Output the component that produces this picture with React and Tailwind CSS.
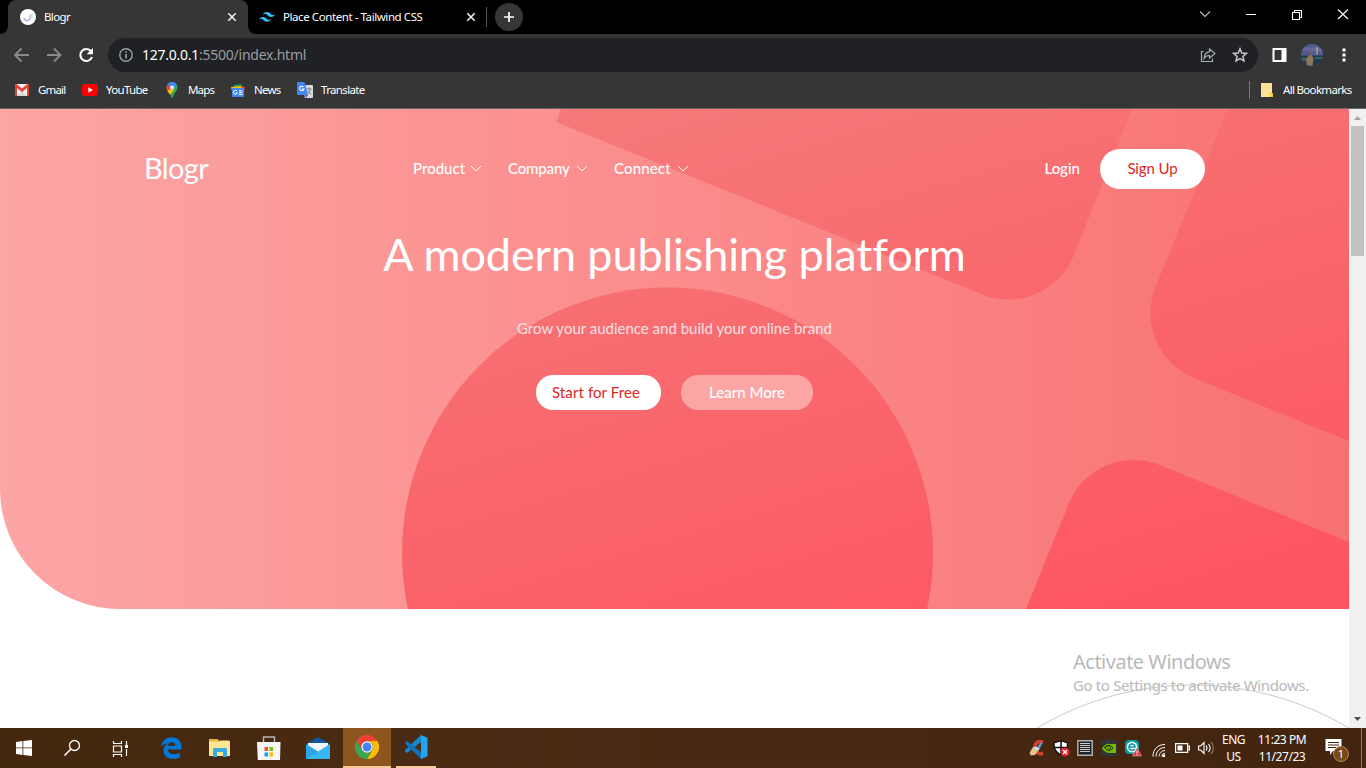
import React from "react";

const CloseIcon = ({ className = "" }) => (
  <svg className={className} width="10" height="10" viewBox="0 0 10 10" stroke="#f1f1f1" strokeWidth="1.6">
    <path d="M1.3 1.3 8.7 8.7M8.7 1.3 1.3 8.7" />
  </svg>
);

function TabStrip() {
  return (
    <div className="flex h-[34px] bg-black">
      <div className="flex w-2 items-end bg-[#363636]">
        <div className="h-full w-2 rounded-br-lg bg-black" />
      </div>
      <div className="flex w-60 bg-black">
        <div className="flex w-full items-center rounded-t-lg bg-[#363636] pl-3 pr-[11px]">
          <svg width="16" height="16" viewBox="0 0 16 16">
            <circle cx="8" cy="8" r="8" fill="#fff" />
            <path d="M4 8.500c0 4 6 4 6 .5V6.500" fill="none" stroke="#a9aee0" strokeWidth="1.200" />
            <path d="M9 8l2.500-2.500M12 5v4.500" stroke="#a5dfe2" strokeWidth="1.100" />
          </svg>
          <span className="ml-2 flex-1 text-[11.5px] tracking-[-0.6px] text-white">Blogr</span>
          <CloseIcon />
        </div>
      </div>
      <div className="flex w-[238px] bg-[#363636]">
        <div className="flex h-full w-full items-center rounded-bl-lg bg-black pl-[11px] pr-[10px]">
          <svg width="16" height="10" viewBox="0 0 54 33" fill="#38bdf8">
            <path d="M27 0C19.800 0 15.300 3.600 13.500 10.800 16.200 7.200 19.350 5.850 22.950 6.750 25.004 7.263 26.472 8.754 28.097 10.403 30.744 13.090 33.808 16.200 40.500 16.200 47.700 16.200 52.200 12.600 54 5.400 51.300 9 48.150 10.350 44.550 9.450 42.496 8.937 41.028 7.446 39.403 5.797 36.756 3.110 33.692 0 27 0ZM13.500 16.200C6.300 16.200 1.800 19.800 0 27 2.700 23.400 5.850 22.050 9.450 22.950 11.504 23.464 12.972 24.954 14.597 26.603 17.244 29.290 20.308 32.400 27 32.400 34.200 32.400 38.700 28.800 40.500 21.600 37.800 25.200 34.650 26.550 31.050 25.650 28.996 25.137 27.528 23.646 25.903 21.997 23.256 19.310 20.192 16.200 13.500 16.200Z" />
          </svg>
          <span className="ml-2 flex-1 whitespace-nowrap text-[11.5px] tracking-[-0.42px] text-white">Place Content - Tailwind CSS</span>
          <CloseIcon />
        </div>
      </div>
      <div className="flex flex-1 items-center bg-black">
        <div className="mt-[-1px] h-5 w-px bg-[#55585b]" />
        <div className="ml-2 flex h-7 w-7 items-center justify-center rounded-full bg-[#363636]">
          <svg width="10" height="10" viewBox="0 0 10 10" stroke="#fff" strokeWidth="1.7"><path d="M5 0v10M0 5h10" /></svg>
        </div>
        <svg className="ml-auto mr-[15px] mb-[6px]" width="156" height="14" viewBox="0 0 156 14" fill="none" stroke="#fff">
          <path d="M5 4.500 10 9.500 15 4.500" stroke="#bbb" strokeWidth="1.100" />
          <path d="M51 7.500h10" strokeWidth="1" />
          <path d="M97.500 5.500h7v7h-7zM99.500 5.500v-2h7v7h-2" strokeWidth="1.100" />
          <path d="M143 2.500 153 12M153 2.500 143 12" strokeWidth="1.100" />
        </svg>
      </div>
    </div>
  );
}

function Toolbar() {
  return (
    <div className="flex h-[42px] items-center bg-[#363636]">
      <svg className="ml-[13px]" width="82" height="18" viewBox="0 0 82 18" fill="none" stroke="#8b8b8b" strokeWidth="1.800">
        <path d="M16 9H2.500M8.500 2.500 2 9l6.500 6.500" />
        <path d="M34 9h13.500M41 2.500 47.500 9 41 15.500" />
        <path d="M78 5.200A6 6 0 1 0 79 11" stroke="#fff" strokeWidth="2.100" />
        <path d="M80 2v6.300h-6.300z" fill="#fff" stroke="none" />
      </svg>
      <div className="ml-[13px] flex h-[34px] w-[1150px] items-center rounded-full bg-[#202124] pl-[11px] pr-[10px]">
        <svg width="14" height="14" viewBox="0 0 14 14" fill="none" stroke="#9aa0a6" strokeWidth="1.400">
          <circle cx="7" cy="7" r="6.200" /><path d="M7 6v4.500M7 3.300v1.500" strokeWidth="1.600" />
        </svg>
        <span className="ml-[9px] flex-1 text-sm tracking-[-0.25px] text-[#9a9da0]"><span className="text-white">127.0.0.1</span>:5500/index.html</span>
        <svg width="16" height="16" viewBox="0 0 16 16" fill="none" stroke="#aaadb0" strokeWidth="1.200">
          <path d="M3.500 4.500H1.500v10h11v-3" />
          <path d="M9.500 2l5.500 4.500L9.500 11V8.500C7 8.300 5.500 9.300 4 11.500 4.300 8 6 5.200 9.500 4.700z" />
        </svg>
        <svg className="ml-[16px]" width="16" height="16" viewBox="0 0 16 16" fill="none" stroke="#c5c7c9" strokeWidth="1.500">
          <path d="M8 1.800 9.800 6l4.600.4-3.500 3 1.100 4.500L8 11.500 4 13.900l1.100-4.500-3.500-3L6.200 6z" />
        </svg>
      </div>
      <svg className="ml-[14px]" width="15" height="14" viewBox="0 0 15 14"><path fill="#fff" fillRule="evenodd" d="M.5 0h14v14H.5zM2.500 2v10h7V2z" /></svg>
      <svg className="ml-[14px]" width="22" height="22" viewBox="0 0 22 22">
        <defs><clipPath id="avatar"><circle cx="11" cy="11" r="11" /></clipPath></defs>
        <g clipPath="url(#avatar)">
          <path fill="#4f5a8e" d="M0 0h22v22H0z" />
          <path fill="#66699b" d="M0 3l22 1v4L0 6z" />
          <path fill="#20384d" d="M0 11.500h22V22H0z" />
          <path fill="#37665f" d="M0 14l8-1v4H0zM14 13h8v2h-8z" />
          <path fill="#b8a17f" d="M15 2.500l1.500 1 .5 7h-1.500z" />
          <path fill="#8b7657" d="M5 15l3-4 3 0 1.500 4-1 7H6z" /><circle cx="9.500" cy="8.800" r="1.700" fill="#83593c" />
        </g>
      </svg>
      <svg className="ml-[19px]" width="4" height="14" viewBox="0 0 4 14" fill="#fff"><path d="M.5.500h3v3h-3zM.5 5.500h3v3h-3zM.5 10.500h3v3h-3z" /></svg>
    </div>
  );
}

const GmailIcon = () => (
  <svg width="14" height="12" viewBox="0 0 14 12">
    <path fill="#f2f2f2" d="M0 0h14v12H0z" /><path fill="#d8d8d8" d="M2 12l5-5 5 5z" />
    <path fill="#e04337" d="M0 0h1.500L7 4.500 12.500 0H14v12h-2V4L7 8 2 4v8H0z" />
  </svg>
);
const YouTubeIcon = () => (
  <svg width="16" height="12" viewBox="0 0 16 12"><rect width="16" height="12" rx="3" fill="#f00" /><path fill="#fff" d="M6.300 3.300 11 6 6.300 8.700z" /></svg>
);
const MapsIcon = () => (
  <svg width="12" height="16" viewBox="0 0 12 16">
    <path fill="#34a853" d="M6 0a5.500 5.500 0 0 1 5.500 5.500C11.500 9 7.500 11 6.800 15.500H5.200C4.500 11 .5 9 .5 5.500A5.500 5.500 0 0 1 6 0z" />
    <path fill="#fbbc04" d="M1 8 6 2.500 8 8l-4 4.500C3 11 1.500 9.800 1 8z" />
    <path fill="#ea4335" d="M1.800 2 6 5.500 1.500 9C.3 7 0 4 1.800 2z" />
    <path fill="#4285f4" d="M1.800 2C4-.7 9-.7 10.700 2.700L6 8z" />
    <circle cx="6" cy="5.500" r="1.900" fill="#e9eef7" />
  </svg>
);
const NewsIcon = () => (
  <svg width="14" height="13" viewBox="0 0 14 13">
    <path fill="#0f9d58" d="M2.500 1l8-1 1 5h-9z" /><path fill="#ea4335" d="M9 2l5 .8L13 8H9z" /><path fill="#fbbc04" d="M0 3l10-1 2 5H1z" />
    <rect x="1" y="4" width="12" height="9" rx="1" fill="#4285f4" />
    <path d="M6 7a2 2 0 1 0 .3 2H4.800M8 6.800h3.500M8 8.600h3.500M8 10.400h3.500" fill="none" stroke="#fff" />
  </svg>
);
const TranslateIcon = () => (
  <svg width="16" height="16" viewBox="0 0 16 16">
    <path fill="#d7d9dc" d="M5 3h10a1 1 0 0 1 1 1v11a1 1 0 0 1-1 1H8z" />
    <path fill="#4285f4" d="M1 0h6.500L11 13H1a1 1 0 0 1-1-1V1a1 1 0 0 1 1-1z" /><path fill="#2f66c8" d="M8 13h3l-2 3z" />
    <path d="M6.500 5a2.200 2.200 0 1 0 .4 2H4.800" fill="none" stroke="#fff" strokeWidth="1.100" />
    <path d="M9.500 7h5M12 5.800V7M13.500 7c-.5 2.500-1.500 4-3 5.200M10.800 8.500c1 2 2 3 3.500 3.700" fill="none" stroke="#70757a" strokeWidth=".9" />
  </svg>
);

function Bookmarks() {
  return (
    <div className="flex h-[33px] items-center border-b border-[#666] bg-[#363636] pb-[4px] pl-[15px] text-[11.5px] text-white">
      <div className="flex w-[67px] items-center gap-[9px]"><GmailIcon /><span className="tracking-[-0.85px]">Gmail</span></div>
      <div className="flex w-[84px] items-center gap-2"><YouTubeIcon /><span className="tracking-[-0.7px]">YouTube</span></div>
      <div className="flex w-[65px] items-center gap-[10px]"><MapsIcon /><span className="tracking-[-0.85px]">Maps</span></div>
      <div className="flex w-[66px] items-center gap-[9px]"><NewsIcon /><span className="tracking-[-0.75px]">News</span></div>
      <div className="flex items-center gap-2"><TranslateIcon /><span className="tracking-[-0.65px]">Translate</span></div>
      <div className="ml-auto flex w-[117px] items-center border-l border-[#777] pl-[11px]">
        <svg width="12" height="14" viewBox="0 0 12 14"><path fill="#fde293" d="M0 0h11v10h1v4H0z" /><path fill="#f1c232" d="M9 10h3v4H9z" /><path fill="#fde293" d="M10 11h1v2h-1z" /></svg>
        <span className="ml-[10px] whitespace-nowrap tracking-[-0.68px]">All Bookmarks</span>
      </div>
    </div>
  );
}

const Chevron = () => (
  <svg width="12" height="8" viewBox="0 0 12 8" fill="none" stroke="#fff" strokeWidth="1"><path d="M1 1l5 5 5-5" /></svg>
);

function Hero() {
  return (
    <section className="relative h-[500px] overflow-hidden rounded-bl-[120px] bg-linear-to-r from-[#fca5a5] to-[#f87171] font-['Lato',sans-serif] text-white">
      <svg className="absolute inset-0" width="1349" height="500" viewBox="0 0 1349 500">
        <defs>
          <linearGradient id="pattern" gradientUnits="userSpaceOnUse" x1="560" y1="11" x2="787" y2="769">
            <stop offset="0" stopColor="#f57978" /><stop offset="1" stopColor="#ff4d5c" />
          </linearGradient>
        </defs>
        <g fill="url(#pattern)">
          <path d="M561 0 556 13 980.600 184.700A70 70 0 0 0 1074 146L1132 0z" />
          <path d="M1227.700 0 1155.500 178A70 70 0 0 0 1194 269L1349 332V0z" />
          <path d="M1026 500 1068.500 395A70 70 0 0 1 1159.700 356L1349 433V500z" />
          <circle cx="667.500" cy="444" r="265.500" />
        </g>
      </svg>
      <div className="relative flex h-full flex-col">
        <nav className="mt-10 flex h-10 items-center pl-36 pr-36">
          <div className="w-[269px] pb-0.5 text-[29px] tracking-[-0.6px]">Blogr</div>
          <div className="flex items-center text-[15px] font-medium">
            <div className="flex w-[95px] items-center"><span className="w-[57px] pb-px">Product</span><Chevron /></div>
            <div className="flex w-[106px] items-center"><span className="w-[68px] pb-px tracking-[-0.15px]">Company</span><Chevron /></div>
            <div className="flex items-center"><span className="w-[63px] pb-px tracking-[0.15px]">Connect</span><Chevron /></div>
          </div>
          <span className="ml-auto mr-5 pb-px text-[15px] font-medium">Login</span>
          <button className="h-10 w-[105px] rounded-[20px] bg-white pb-px text-[15px] tracking-[-0.1px] text-[#dc2626]">Sign Up</button>
        </nav>
        <h1 className="mt-[35px] text-center text-[45px] leading-[60px] tracking-[-0.1px]">A modern publishing platform</h1>
        <p className="mt-[32px] text-center text-[15px] leading-6 text-[#f4e1e6]">Grow your audience and build your online brand</p>
        <div className="mt-[35px] flex justify-center gap-5">
          <button className="h-[35px] w-[125px] rounded-[17px] bg-white pb-px pr-[5px] text-[15px] tracking-[0.1px] text-[#dc2626]">Start for Free</button>
          <button className="h-[35px] w-[132px] rounded-[17px] bg-[#fca5a5] text-[15px] font-medium">Learn More</button>
        </div>
      </div>
    </section>
  );
}

function Page() {
  return (
    <main className="flex h-[619px]">
      <div className="relative w-[1349px] overflow-hidden bg-white">
        <Hero />
        <svg className="absolute bottom-0 right-0" width="349" height="80" viewBox="0 0 349 80" fill="none" stroke="#cacaca">
          <circle cx="193" cy="341" r="304" />
        </svg>
        <div className="absolute left-[1073px] top-[540px] whitespace-nowrap text-[#b9b9b9]">
          <div className="text-[20px] leading-[25px] tracking-[-0.5px]">Activate Windows</div>
          <div className="text-[15px] leading-[22px] tracking-[-0.36px]">Go to Settings to activate Windows.</div>
        </div>
      </div>
      <div className="flex w-[17px] flex-col items-center bg-[#f1f1f1]">
        <svg width="17" height="17" viewBox="0 0 17 17" fill="#a3a3a3"><path d="M5 11h7L8.500 7z" /></svg>
        <div className="h-[130px] w-[13px] bg-[#c1c1c1]" />
        <svg className="mt-auto" width="17" height="17" viewBox="0 0 17 17" fill="#505050"><path d="M5 6h7L8.500 10z" /></svg>
      </div>
    </main>
  );
}

const Slot = ({ className = "", children }) => (
  <div className={"flex h-10 w-12 items-center justify-center " + className}>{children}</div>
);

function Taskbar() {
  return (
    <footer className="flex h-10 bg-linear-to-r from-[#43270e] via-[#4a2b14] via-30% to-[#43250f] text-white">
      <Slot><svg width="16" height="16" viewBox="0 0 16 16" fill="#fff"><path d="M0 2l6.500-1v6.500H0zM7.300.9 16 0v7.500H7.300zM0 8.300h6.500V15L0 14zM7.300 8.300H16V16l-8.700-1.100z" /></svg></Slot>
      <Slot><svg width="18" height="18" viewBox="0 0 18 18" fill="none" stroke="#fff" strokeWidth="1.300"><circle cx="11.500" cy="6.500" r="5" /><path d="M8 10 1.500 16.500" strokeWidth="1.600" /></svg></Slot>
      <Slot><svg width="17" height="17" viewBox="0 0 17 17" fill="none" stroke="#fff" strokeWidth="1.200"><path d="M1.500 1v2.500h8V1M1.500 6h8v6h-8zM1.500 17v-2.500h8V17M14.500 1v4M14.500 9v7" /><path fill="#fff" stroke="none" d="M13 5h3v3h-3z" /></svg></Slot>
      <Slot className="pl-[6px]"><svg width="21" height="22" viewBox="0 0 21 22"><path fill="#0078d7" d="M.3 9.700C1 4 5 .3 10.700.3 17 .3 20.500 4.600 20.500 10v2.500H6.800c.2 3.100 2.800 4.700 6.300 4.700 2.400 0 4.200-.6 6-1.600v4.700c-2 1-4.400 1.500-7 1.500C6 21.800 2.500 18.500 2.500 13.700c0-3.100 1.700-5.700 4.300-7.200C3.900 6.700 1.600 8 .3 9.700zM6.900 8.800h7.300c0-2.300-1.200-3.600-3.500-3.600-2 0-3.400 1.300-3.800 3.600z" /></svg></Slot>
      <Slot className="pl-[8px]"><svg width="22" height="20" viewBox="0 0 22 20"><path fill="#e8b640" d="M0 1h9l1 2h10v4H0z" /><path fill="#ffe694" d="M0 3.500h10l1-1h9l1 1V18H0z" /><path fill="#36a9e1" d="M4 11l1-1h12l1 1v8h-4v-5H8v5H4z" /></svg></Slot>
      <Slot className="pl-[9px]"><svg width="24" height="24" viewBox="0 0 24 24"><path d="M6.500 7V1h11v6" fill="none" stroke="#b7b7b7" strokeWidth="1.400" /><path fill="#f6f6f6" d="M0 6h23.500l-.5 18H.8z" /><path fill="#f35325" d="M7.500 11H11v4H7.500z" /><path fill="#81bc06" d="M12.500 11H16v4h-3.500z" /><path fill="#05a6f0" d="M7.500 16.500H11v4H7.500z" /><path fill="#ffba08" d="M12.500 16.500H16v4h-3.500z" /></svg></Slot>
      <Slot className="pl-3"><svg width="24" height="22" viewBox="0 0 24 22"><path fill="#1257a0" d="M0 7 12 0l12 7v10H0z" /><path fill="#f5f7fa" d="M2 6h20v9H2z" /><path fill="#2ba3e6" d="M0 7l24 15H0z" /><path fill="#38b6f1" d="M24 7v15H0z" /><path fill="#f5f7fa" d="M2.500 6.500h19L12 13.500z" /></svg></Slot>
      <Slot className="ml-[7px] border-b-2 border-[#f8c99a] bg-[#8d561f]">
        <svg width="24" height="24" viewBox="0 0 48 48">
          <path fill="#ea4335" d="M3.200 12A24 24 0 0 1 44.800 12H24A12 12 0 0 0 13.600 30z" />
          <path fill="#fbbc04" d="M44.800 12A24 24 0 0 1 24 48L34.400 30A12 12 0 0 0 24 12z" />
          <path fill="#34a853" d="M24 48A24 24 0 0 1 3.200 12L13.600 30a12 12 0 0 0 20.800 0z" />
          <circle cx="24" cy="24" r="11.500" fill="#fff" /><circle cx="24" cy="24" r="9" fill="#4285f4" />
        </svg>
      </Slot>
      <div className="ml-[5px] flex h-10 w-10 items-center justify-center border-b-2 border-[#f8c99a]">
        <svg width="24" height="24" viewBox="0 0 24 24"><path fill="#1688d2" d="M17 0v7L3 18l-2-1.500v-1.200z" /><path fill="#1073b8" d="M17 24v-7L3 6 1 7.500v1.200z" /><path fill="#25a4ef" d="M17 0l6.500 2.800v18.400L17 24z" /></svg>
      </div>
      <div className="ml-auto mr-[12px] flex items-center">
        <svg width="17" height="17" viewBox="0 0 17 17"><path d="M14 2.500C8-.5 4 5 7 10.500c1.500 3.500 4.500 4 7 2.500" fill="none" stroke="#d0402c" strokeWidth="3.600" /><path fill="#5a9bd0" d="M8 7l4-5 1.500 1-3 6z" /><path fill="#e7c58a" d="M4 7l5 4-3 4-4 .5L.500 13z" /><path fill="#dbe7ee" d="M4 7.500l5.500 3.500 1-2.500-4-2z" /></svg>
        <svg className="ml-[7px]" width="17" height="17" viewBox="0 0 17 17"><path fill="#fff" stroke="#080808" strokeWidth="1.200" d="M8 .8 14.500 3c0 6-1 9-6.500 12C2.500 12 1 9 1 3z" /><path d="M8 1v14M1 7.500h13" stroke="#080808" strokeWidth="1.500" /><circle cx="12" cy="12" r="4.500" fill="#df2430" /><path d="M10 10l4 4M14 10l-4 4" stroke="#fff" strokeWidth="1.200" /></svg>
        <svg className="ml-[7px]" width="16" height="16" viewBox="0 0 16 16"><path fill="#222" stroke="#a8b0b3" strokeWidth="1.500" d="M.8.8h14.400v14.400H.8z" /><path d="M3 3.500h10M3 5.500h10M3 7.500h10M3 9.500h10M3 11.500h10" stroke="#c9c9c9" strokeWidth="1" /></svg>
        <svg className="ml-[8px]" width="16" height="16" viewBox="0 0 16 16"><rect width="16" height="16" rx="1" fill="#30343a" /><path fill="#76b900" d="M1 8c3-4 6-5 8-4h6v9H7C4 12 2 10 1 8z" /><path d="M3 8c3-4 7-3 9 0-3 4-6 3-8 0 2-3 5-2 6 0-1 2-3 1-4 0" fill="none" stroke="#263515" /></svg>
        <svg className="ml-[8px]" width="17" height="17" viewBox="0 0 17 17"><rect width="14" height="14" rx="4" fill="#079aa0" /><circle cx="7" cy="7" r="5.400" fill="#fff" /><path d="M4 7h6c0-4-6-4-6 0s4 4 6 2" fill="none" stroke="#079aa0" strokeWidth="1.600" /><path fill="#e3343d" stroke="#fff" strokeWidth=".4" d="M12 7.500 16.500 16h-9z" /><path d="M12 10.500v3M12 14.200v1" stroke="#fff" /></svg>
        <svg className="ml-[10px] mt-1" width="14" height="14" viewBox="0 0 14 14" fill="none" stroke="#fff" strokeWidth="1"><path d="M1 13.500C1 6 6 1.500 13 1.500M4 13.500c0-5 4-9 9-9M7 13.500c0-3 3-6 6-6M10 13.500c0-2 1-3 3-3" /><path fill="#fff" stroke="none" d="M10.500 11.500h2.500v2.500h-2.500z" /></svg>
        <svg className="ml-[9px]" width="15" height="10" viewBox="0 0 15 10" fill="none" stroke="#fff" strokeWidth="1.200"><path d="M.6.600h12v8.800H.6zM13 3h1.400v4H13" /><path fill="#fff" stroke="none" d="M2.500 2.500h5v5h-5z" /></svg>
        <svg className="ml-[8px]" width="17" height="14" viewBox="0 0 17 14" fill="none" stroke="#fff" strokeWidth="1.100"><path d="M.6 5h2L6 1.500v11L2.600 9h-2zM8 4.500c1.200 1.500 1.200 3.500 0 5M10.500 3c2 2.500 2 5.500 0 8" /><path stroke="#8e7966" d="M13 1c3 3 3 9 0 12" /></svg>
        <div className="ml-[3px] w-[31px] text-center text-xs leading-[17px] tracking-[-0.5px]">ENG<br />US</div>
        <div className="ml-[5px] w-[56px] whitespace-nowrap text-center text-xs leading-[17px] tracking-[-0.45px]">11:23 PM<br />11/27/23</div>
        <div className="relative ml-[15px] h-5 w-[24px]">
          <svg width="17" height="18" viewBox="0 0 17 18"><path fill="#fff" d="M.5 1h16v12H8l-3 4v-4H.5z" /><path d="M3 4.500h11M3 7h11M3 9.500h8" stroke="#44260f" strokeWidth="1.200" /></svg>
          <div className="absolute left-[8px] top-[8px] flex h-4 w-4 items-center justify-center rounded-full border border-[#ad8a63] bg-[#7b4a12] text-[11px]">1</div>
        </div>
      </div>
      <div className="w-[5px] border-l border-[#8b7664]" />
    </footer>
  );
}

export default function App() {
  return (
    <div className="flex h-[768px] w-[1366px] flex-col overflow-hidden font-['Noto_Sans',sans-serif]">
      <TabStrip />
      <Toolbar />
      <Bookmarks />
      <Page />
      <Taskbar />
    </div>
  );
}
